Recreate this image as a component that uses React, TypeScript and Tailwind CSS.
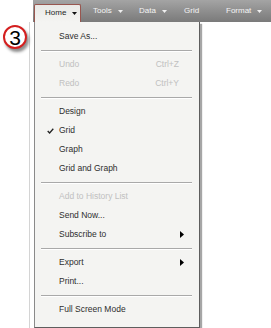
import React from "react";

const font = { fontFamily: '"Liberation Sans", Arial, sans-serif' };

function DownArrow({ color }: { color: string }) {
  return (
    <svg width="5" height="3" viewBox="0 0 5 3" className="shrink-0">
      <polygon points="0,0 5,0 2.5,3" fill={color} />
    </svg>
  );
}

function RightArrow() {
  return (
    <svg width="4" height="7" viewBox="0 0 4 7" className="shrink-0">
      <polygon points="0,0 4,3.5 0,7" fill="#000" />
    </svg>
  );
}

function Check() {
  return (
    <svg width="7" height="6" viewBox="0 0 7 6" className="absolute left-[12px] top-[7px]">
      <polyline points="0.7,3 2.6,5 6.3,0.8" fill="none" stroke="#222" strokeWidth="1.3" />
    </svg>
  );
}

type Item = {
  label: string;
  disabled?: boolean;
  shortcut?: string;
  sub?: boolean;
  checked?: boolean;
};

function MenuItem({ item }: { item: Item }) {
  return (
    <div
      className={`relative flex h-[19px] items-center pl-[24px] pr-[15px] text-[8.5px] ${
        item.disabled ? "text-[#c0c0c0]" : "text-[#2e2e2e]"
      }`}
    >
      {item.checked && <Check />}
      <span className="whitespace-nowrap">{item.label}</span>
      {item.shortcut && <span className="ml-auto mr-[5px] whitespace-nowrap">{item.shortcut}</span>}
      {item.sub && (
        <span className="ml-auto">
          <RightArrow />
        </span>
      )}
    </div>
  );
}

function Sep() {
  return (
    <div className="flex h-[9px] items-center pl-[6px] pr-[7px]">
      <div className="h-[2px] w-full border-t border-t-[#a9a9a9] border-b border-b-[#ffffff]" />
    </div>
  );
}

const groups: Item[][] = [
  [{ label: "Save As..." }],
  [
    { label: "Undo", disabled: true, shortcut: "Ctrl+Z" },
    { label: "Redo", disabled: true, shortcut: "Ctrl+Y" },
  ],
  [
    { label: "Design" },
    { label: "Grid", checked: true },
    { label: "Graph" },
    { label: "Grid and Graph" },
  ],
  [
    { label: "Add to History List", disabled: true },
    { label: "Send Now..." },
    { label: "Subscribe to", sub: true },
  ],
  [{ label: "Export", sub: true }, { label: "Print..." }],
  [{ label: "Full Screen Mode" }],
];

export default function App() {
  return (
    <div className="relative h-[328px] w-[271px] overflow-hidden bg-white" style={font}>
      {/* top bar */}
      <div className="flex h-[22px]">
        <div className="w-[33px] bg-white" />
        <div className="flex flex-1 items-stretch bg-gradient-to-b from-[#a4a4a4] to-[#7a7a7a] text-[8px]">
          <div className="ml-[1px] mt-[4px] flex w-[47px] items-center rounded-t-[2px] border-x border-t border-[#98564f] bg-gradient-to-b from-[#e9e9e6] to-[#f4f4f2] pb-[1px] pl-[10px] text-[#1e1e1e]">
            <span>Home</span>
            <span className="ml-[6px]">
              <DownArrow color="#111" />
            </span>
          </div>
          <div className="ml-[12px] flex w-[46px] items-center text-[#f4f4f4]">
            <span>Tools</span>
            <span className="ml-[6px]">
              <DownArrow color="#f0f0f0" />
            </span>
          </div>
          <div className="flex w-[45px] items-center text-[#f4f4f4]">
            <span>Data</span>
            <span className="ml-[6px]">
              <DownArrow color="#f0f0f0" />
            </span>
          </div>
          <div className="flex w-[42px] items-center text-[#f4f4f4]">
            <span>Grid</span>
          </div>
          <div className="flex items-center text-[#f4f4f4]">
            <span>Format</span>
            <span className="ml-[6px]">
              <DownArrow color="#f0f0f0" />
            </span>
          </div>
        </div>
      </div>

      {/* body */}
      <div className="flex">
        <div className="h-[306px] w-[30px] border-r border-r-[#d4d4d4]" />
        <div className="w-[4px]" />
        <div className="w-[166px] border-x border-b border-l-[#8a8a8a] border-r-[#5e5e5e] border-b-[#5e5e5e] bg-[#f4f4f2] pb-[6px] pt-[5px] shadow-[2px_2px_1px_rgba(0,0,0,0.35)]">
          {groups.map((g, gi) => (
            <React.Fragment key={gi}>
              {gi > 0 && <Sep />}
              {g.map((it) => (
                <MenuItem key={it.label} item={it} />
              ))}
            </React.Fragment>
          ))}
        </div>
      </div>

      {/* callout badge */}
      <div className="absolute left-[3px] top-[25px] flex h-[24px] w-[24px] items-center justify-center rounded-full border-2 border-[#d41f1f] bg-white pt-[1px] text-[21px] leading-none text-black shadow-[2px_3px_3px_rgba(0,0,0,0.45)]">
        3
      </div>
    </div>
  );
}
